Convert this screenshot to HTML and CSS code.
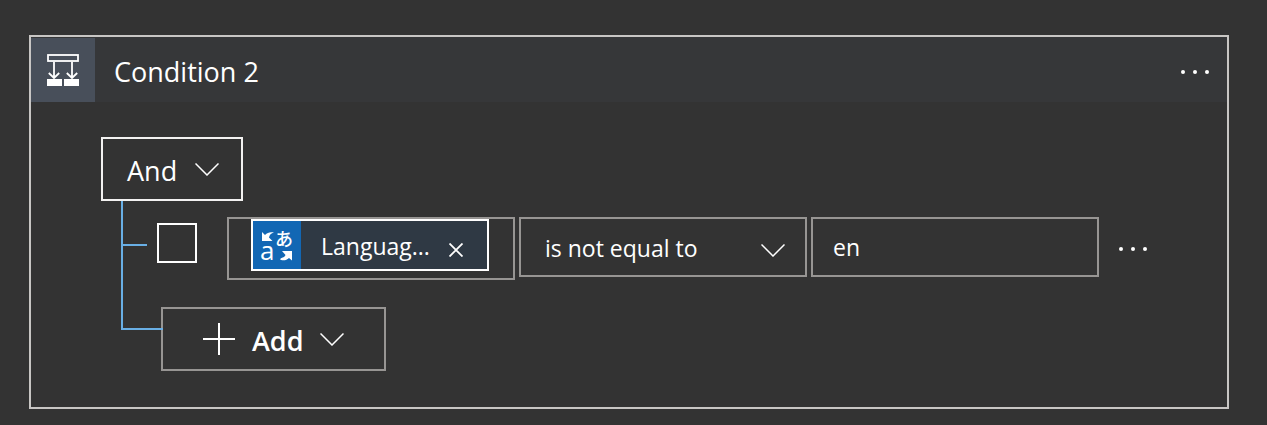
FILE: index.html
```html
<!DOCTYPE html>
<html lang="en">
<head>
<meta charset="utf-8">
<title>Condition 2</title>
<link rel="stylesheet" href="styles.css">
</head>
<body>
<main class="card">
  <header class="card-header">
    <span class="card-icon">
      <svg width="32" height="32" viewBox="0 0 32 32" fill="none" stroke="#fff" aria-hidden="true">
        <rect x="1" y="1" width="30" height="6" stroke-width="1.800"/>
        <path d="M7 8v16M1.800 19l5.200 5 5.200-5M25 8v16M19.800 19l5.200 5 5.200-5" stroke-width="1.800"/>
        <path d="M0 25h15v7H0zM17 25h15v7H17z" fill="#fff" stroke="none"/>
      </svg>
    </span>
    <h1 class="card-title">Condition 2</h1>
    <button class="more header-more" type="button" aria-label="Condition menu"><i class="dot"></i><i class="dot"></i><i class="dot"></i></button>
  </header>
  <section class="card-body">
    <button class="box-button group-button" type="button"><span class="button-label">And</span>
      <svg class="chevron" viewBox="0 0 24 13" aria-hidden="true"><path d="M0.500 0.500L12 12 23.500 0.500"/></svg>
    </button>
    <div class="tree">
      <div class="rule">
        <span class="branch"></span>
        <input class="check" type="checkbox" aria-label="Select row">
        <div class="fields">
          <div class="field token-field">
            <div class="token">
              <svg class="token-icon" viewBox="0 0 48 48" aria-hidden="true">
                <path d="M9 11l3 3c2.500-2.500 5-3.300 9-2.500-3 .8-4.500 2.500-5 5l3.500 3.500H9z"/>
                <path d="M39 30v9.500l-3-2.500c-2.500 2.500-5 2.500-8 2-1 0-1-1.500 0-1.800 2.500-.7 4-1.700 4.500-3.200L29 30z"/>
                <text class="glyph-latin" x="7" y="39">a</text>
                <text class="glyph-kana" x="22" y="25">あ</text>
              </svg>
              <span class="token-label">Languag...</span>
              <button class="token-close" type="button" aria-label="Remove">
                <svg width="14" height="14" viewBox="0 0 14 14" fill="none" stroke="#fff" stroke-width="1.800" aria-hidden="true"><path d="M0.500 0.500l13 13M13.500 0.500l-13 13"/></svg>
              </button>
            </div>
          </div>
          <div class="field select-field">
            <select class="control" aria-label="Operator"><option>is not equal to</option></select>
            <svg class="chevron select-chevron" viewBox="0 0 24 13" aria-hidden="true"><path d="M0.500 0.500L12 12 23.500 0.500"/></svg>
          </div>
          <div class="field">
            <input class="control value" type="text" value="en" aria-label="Value">
          </div>
        </div>
        <button class="more row-more" type="button" aria-label="Row menu"><i class="dot"></i><i class="dot"></i><i class="dot"></i></button>
      </div>
      <button class="box-button add-button" type="button">
        <svg class="plus" width="32" height="32" viewBox="0 0 32 32" aria-hidden="true"><path d="M16 0v32M0 16h32" stroke="#fff" stroke-width="2"/></svg>
        <span class="button-label">Add</span>
        <svg class="chevron" viewBox="0 0 24 13" aria-hidden="true"><path d="M0.500 0.500L12 12 23.500 0.500"/></svg>
      </button>
    </div>
  </section>
</main>
</body>
</html>
```
FILE: styles.css
```css
* { box-sizing: border-box; }

body {
  margin: 0;
  padding: 35px 38px 16px 29px;
  background: #333;
  color: #fff;
  font-family: "Open Sans", "Noto Sans", sans-serif;
  font-size: 23px;
}

button, input, select {
  margin: 0;
  color: inherit;
  font: inherit;
}

button {
  padding: 0;
  border: 0;
  background: none;
}

.card { border: 2px solid #c8c6c4; }

.card-header {
  display: flex;
  align-items: center;
  height: 65px;
  padding-right: 10px;
  background: #363739;
}

.card-icon {
  display: flex;
  align-items: center;
  justify-content: center;
  width: 64px;
  height: 64px;
  background: #484f5a;
}

.card-title {
  flex: 1;
  margin: 0 0 0 19px;
  padding-top: 4px;
  font-size: 27px;
  font-weight: 400;
}

.more {
  display: flex;
  flex: none;
  align-items: center;
  justify-content: center;
  gap: 8px;
  width: 44px;
  height: 63px;
}

.header-more { padding-top: 4px; }

.dot {
  width: 4px;
  height: 4px;
  border-radius: 50%;
  background: #fff;
}

.card-body { padding: 35px 72px 36px 70px; }

.box-button {
  display: flex;
  align-items: center;
  height: 64px;
  border: 2px solid #979593;
  font-size: 27px;
}

.button-label { padding-top: 2px; }

.group-button {
  gap: 18px;
  padding: 0 22px 0 24px;
  border-color: #f3f2f1;
}

.chevron {
  width: 24px;
  height: 13px;
  fill: none;
  stroke: #fff;
  stroke-width: 1.5;
}

.tree {
  position: relative;
  margin-left: 20px;
  padding: 16px 0 0 2px;
}

.tree::before {
  content: "";
  position: absolute;
  top: 0;
  bottom: 41px;
  left: 0;
  width: 40px;
  border: solid #69afe5;
  border-width: 0 0 2px 2px;
  pointer-events: none;
}

.rule {
  display: flex;
  align-items: flex-start;
}

.branch {
  width: 24px;
  height: 2px;
  margin-top: 27px;
  background: #69afe5;
}

.check {
  flex: none;
  width: 40px;
  height: 40px;
  margin: 6px 30px 0 10px;
  border: 2px solid #fff;
  appearance: none;
}

.fields {
  display: grid;
  flex: 1;
  grid-template-columns: repeat(3, minmax(0, 1fr));
  align-items: start;
  gap: 4px;
}

.field {
  height: 60px;
  border: 2px solid #979593;
}

.token-field {
  height: 63px;
  padding: 0 24px 0 22px;
}

.token {
  display: flex;
  align-items: center;
  height: 52px;
  border: 2px solid #fff;
  background: #2f3944;
}

.token-icon {
  flex: none;
  width: 48px;
  height: 48px;
  background: #1267b4;
  fill: #fff;
}

.glyph-latin {
  font-family: "Open Sans", sans-serif;
  font-size: 26px;
}

.glyph-kana {
  font-family: "Noto Sans CJK JP", sans-serif;
  font-size: 18px;
  font-weight: 500;
}

.token-label {
  flex: 1;
  min-width: 0;
  margin-left: 20px;
  padding-top: 2px;
  white-space: nowrap;
}

.token-close {
  display: flex;
  flex: none;
  padding: 10px 24px 0 12px;
}

.select-field {
  display: grid;
  align-items: center;
}

.control {
  width: 100%;
  height: 56px;
  padding: 2px 24px 0;
  border: 0;
  outline: 0;
  background: none;
  appearance: none;
}

.value { padding: 0 20px; }

.select-field > * { grid-area: 1 / 1; }

.select-chevron {
  justify-self: end;
  margin: 6px 20px 0 0;
  pointer-events: none;
}

.row-more { margin-left: 12px; }

.add-button {
  gap: 17px;
  margin: 27px 0 0 38px;
  padding: 0 40px;
  font-weight: 600;
}
```
